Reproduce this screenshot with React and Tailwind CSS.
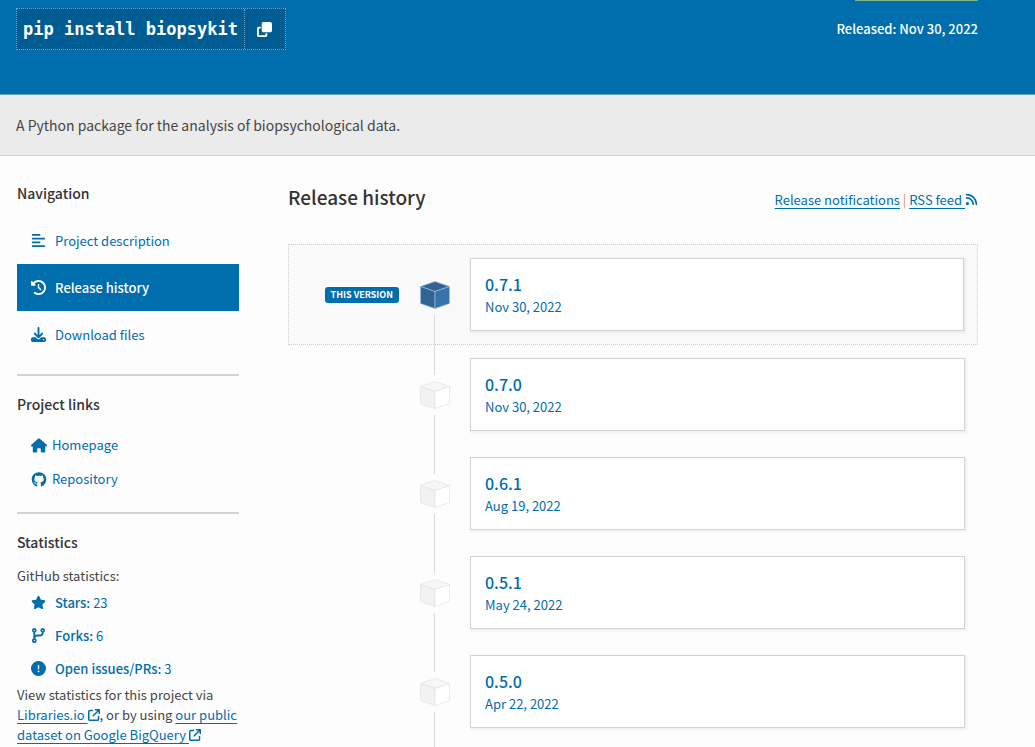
import React, { useState } from "react";
import {
  FaAlignLeft,
  FaClockRotateLeft,
  FaDownload,
  FaHouse,
  FaGithub,
  FaStar,
  FaCodeBranch,
  FaCircleExclamation,
  FaArrowUpRightFromSquare,
  FaRss,
  FaClone,
} from "react-icons/fa6";

const releases = [
  { version: "0.7.1", date: "Nov 30, 2022", current: true },
  { version: "0.7.0", date: "Nov 30, 2022" },
  { version: "0.6.1", date: "Aug 19, 2022" },
  { version: "0.5.1", date: "May 24, 2022" },
  { version: "0.5.0", date: "Apr 22, 2022" },
];

const tabs = [
  { id: "description", label: "Project description", Icon: FaAlignLeft },
  { id: "history", label: "Release history", Icon: FaClockRotateLeft },
  { id: "files", label: "Download files", Icon: FaDownload },
];

const links = [
  { label: "Homepage", Icon: FaHouse },
  { label: "Repository", Icon: FaGithub },
];

const stats = [
  { label: "Stars:", value: 23, Icon: FaStar },
  { label: "Forks:", value: 6, Icon: FaCodeBranch },
  { label: "Open issues/PRs:", value: 3, Icon: FaCircleExclamation },
];

const Cube = ({ current }) => {
  const top = current ? "#2f6494" : "#f7f7f6";
  const left = current ? "#2f6494" : "#f3f2f0";
  const right = current ? "#3673a8" : "#ffffff";
  const line = current ? "#9db9d2" : "#e3e3e1";
  return (
    <svg className="my-1.5 block h-7 w-[30px]" viewBox="0 0 30 28" stroke={line} strokeWidth="0.7" strokeLinejoin="round" aria-hidden="true">
      <path d="M15 0.5 L29.5 5.5 L15 10.5 L0.5 5.5 Z" fill={top} />
      <path d="M0.5 5.5 L15 10.5 V27.5 L0.5 22.5 Z" fill={left} />
      <path d="M29.5 5.5 L15 10.5 V27.5 L29.5 22.5 Z" fill={right} />
    </svg>
  );
};

const SideHeading = ({ children }) => (
  <h3 className="text-[14px] leading-6 font-medium text-[#333]">{children}</h3>
);

const Release = ({ release, first }) => (
  <li
    className={
      release.current
        ? "flex h-[101px] border border-dotted border-[#ccc] bg-[#f9f9f9] pr-[13px]"
        : "flex h-[99px] pr-[13px] pl-px"
    }
  >
    <div className="flex w-[110px] items-center justify-end">
      {release.current && (
        <span className="rounded-[3px] bg-[#006dad] px-1.5 text-[9px] leading-4 font-bold text-white">THIS VERSION</span>
      )}
    </div>
    <div className="flex w-[71px] flex-col items-center">
      <span className={first ? "flex-1" : "w-px flex-1 bg-[#d9d9d9]"} />
      <Cube current={release.current} />
      <span className="w-px flex-1 bg-[#d9d9d9]" />
    </div>
    <a
      href="#release"
      className="my-[13px] flex-1 border border-[#d3d3d3] bg-white px-[14px] pt-[13px] text-[#006dad] shadow-[1px_1px_2px_1px_rgba(0,0,0,0.05)]"
    >
      <p className="text-[16px] leading-6 font-medium">{release.version}</p>
      <p className="text-[13px] leading-[22px]">{release.date}</p>
    </a>
  </li>
);

const App = () => {
  const [active, setActive] = useState("history");

  const copyCommand = () => {
    navigator.clipboard?.writeText("pip install biopsykit");
  };

  return (
    <div className="min-h-screen overflow-hidden bg-[#fdfdfd] font-['Noto_Sans_CJK_SC',sans-serif] text-[13px] text-[#464646]">
      <header className="flex h-[95px] items-start justify-between border-b border-[#6d9fc2] bg-[#006dad] pr-[57px] pl-4 text-white">
        <div className="mt-2 flex h-[42px] border border-dotted border-[#6ea7cb] bg-[#005d93]">
          <code className="flex items-center px-1.5 pt-0.5 font-['DejaVu_Sans_Mono',monospace] text-[17px] font-bold">pip install biopsykit</code>
          <button
            type="button"
            aria-label="Copy install command"
            onClick={copyCommand}
            className="flex w-[41px] items-center justify-center border-l border-dotted border-[#6ea7cb]"
          >
            <FaClone className="h-[15px] w-[15px]" />
          </button>
        </div>
        <div className="flex flex-col items-end">
          <span className="h-px w-[123px] bg-[#7fb48b]" />
          <p className="mt-[18px] leading-5 font-medium">Released: Nov 30, 2022</p>
        </div>
      </header>

      <div className="border-b border-[#d3d3d3] bg-[#ebebeb] px-4 py-[18px]">
        <p className="text-[14px] leading-6">A Python package for the analysis of biopsychological data.</p>
      </div>

      <div className="flex gap-[49px] pt-[25px] pr-[57px] pl-[17px]">
        <aside className="w-[222px] shrink-0">
          <SideHeading>Navigation</SideHeading>
          <nav className="mt-3">
            {tabs.map(({ id, label, Icon }) => (
              <a
                key={id}
                href={"#" + id}
                onClick={() => setActive(id)}
                className={
                  active === id
                    ? "flex h-[47px] items-center gap-[9px] bg-[#006dad] px-[14px] font-medium text-white"
                    : "flex h-[47px] items-center gap-[9px] px-[14px] text-[#006dad]"
                }
              >
                <Icon className="h-[15px] w-[15px]" />
                {label}
              </a>
            ))}
          </nav>

          <div className="mt-4 border-t-2 border-[#d3d3d3] pt-4">
            <SideHeading>Project links</SideHeading>
            <ul className="mt-3">
              {links.map(({ label, Icon }) => (
                <li key={label}>
                  <a href="#link" className="flex h-[34px] items-center gap-[5px] px-[14px] text-[#006dad]">
                    <Icon className="h-[15px] w-4" />
                    {label}
                  </a>
                </li>
              ))}
            </ul>
          </div>

          <div className="mt-4 border-t-2 border-[#d3d3d3] pt-4">
            <SideHeading>Statistics</SideHeading>
            <p className="mt-3 leading-5">GitHub statistics:</p>
            <ul>
              {stats.map(({ label, value, Icon }) => (
                <li key={label}>
                  <a href="#stats" className="flex h-[33px] items-center gap-[9px] px-[14px] text-[#006dad]">
                    <Icon className="h-[15px] w-[15px]" />
                    <span>
                      <strong className="font-medium">{label}</strong> {value}
                    </span>
                  </a>
                </li>
              ))}
            </ul>
            <p className="leading-5">
              View statistics for this project via{" "}
              <a href="#libraries" className="text-[#006dad] underline underline-offset-3">
                Libraries.io <FaArrowUpRightFromSquare className="inline h-3 w-3 align-[-1px]" />
              </a>
              , or by using{" "}
              <a href="#bigquery" className="text-[#006dad] underline underline-offset-3">
                our public dataset on Google BigQuery <FaArrowUpRightFromSquare className="inline h-3 w-3 align-[-1px]" />
              </a>
            </p>
          </div>
        </aside>

        <main className="flex-1">
          <div className="flex h-8 items-center justify-between">
            <h2 className="text-[19px] leading-8 font-medium text-[#333]">Release history</h2>
            <p className="pt-1.5 leading-5">
              <a href="#notifications" className="text-[#006dad] underline underline-offset-3">Release notifications</a>
              <span className="text-[#d9964a]"> | </span>
              <a href="#rss" className="text-[#006dad] underline underline-offset-3">
                RSS feed <FaRss className="inline h-[13px] w-[13px] align-[-1px]" />
              </a>
            </p>
          </div>
          <ol className="mt-[31px]">
            {releases.map((release, i) => (
              <Release key={release.version} release={release} first={i === 0} />
            ))}
          </ol>
          {/* timeline runs on below the last release */}
          <div className="ml-[146px] h-5 w-px bg-[#d9d9d9]" />
        </main>
      </div>
    </div>
  );
};

export default App;
